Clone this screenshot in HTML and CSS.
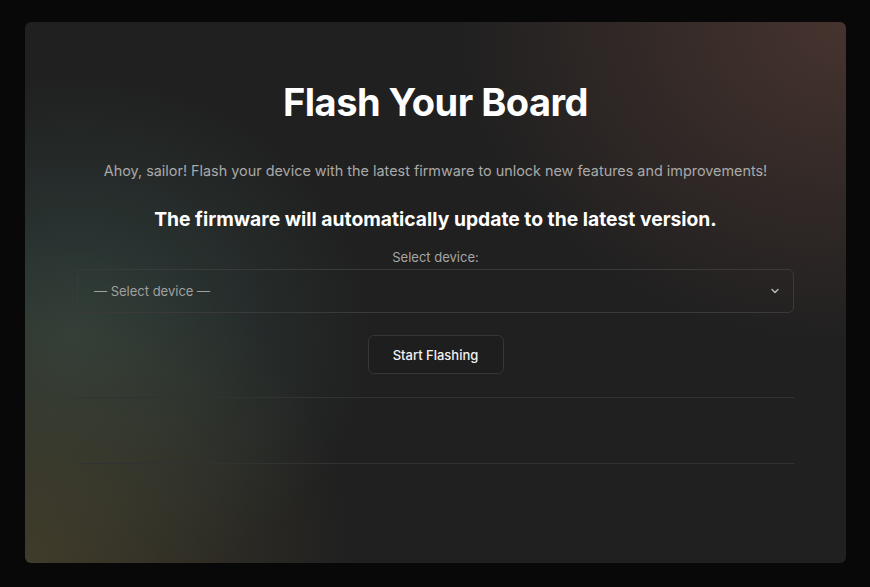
FILE: index.html
```html
<!DOCTYPE html>
<html>
<head>
    <title>Flash Your Board</title>
    <link rel="stylesheet" href="styles.css">
</head>
<body>
    <div class="card">
        <h1>Flash Your Board</h1>
        <p class="intro">Ahoy, sailor! Flash your device with the latest firmware to unlock new features and improvements!</p>
        <p class="notice">The firmware will automatically update to the latest version.</p>

        <div class="form-group">
            <label for="device">Select device:</label>
            <div class="select-wrap">
                <select id="device">
                    <option value="">— Select device —</option>
                </select>
                <svg class="chevron" width="10" height="10" viewBox="0 0 10 10">
                    <path d="M2 3.5 L5 6.5 L8 3.5" fill="none" stroke="#b5b5b5" stroke-width="1.5" stroke-linecap="round" stroke-linejoin="round"/>
                </svg>
            </div>
        </div>

        <button class="flash-btn">Start Flashing</button>

        <div class="log"></div>
    </div>
</body>
</html>
```

FILE: styles.css
```css
html, body {
    height: 100%;
}
body {
    margin: 0;
    background-color: #080808;
    font-family: Inter, "Noto Sans", sans-serif;
    color: #ffffff;
    display: flex;
    padding: 22px 24px 24px 25px;
    box-sizing: border-box;
}
.card {
    flex: 1;
    border-radius: 6px;
    padding: 57px 52px 0 52px;
    display: flex;
    flex-direction: column;
    align-items: center;
    background-color: #202020;
    background-image:
        radial-gradient(ellipse 48% 60% at 100% 0%, rgba(80, 56, 50, 0.8), rgba(80, 56, 50, 0) 100%),
        radial-gradient(ellipse 40% 60% at 0% 100%, rgba(72, 66, 44, 0.8), rgba(72, 66, 44, 0) 100%),
        radial-gradient(ellipse 36% 48% at 6% 58%, rgba(50, 70, 66, 0.8), rgba(50, 70, 66, 0) 100%);
}
h1 {
    margin: 0;
    font-size: 38px;
    line-height: 46px;
    font-weight: 700;
    letter-spacing: -0.5px;
}
.intro {
    margin: 34px 0 0 0;
    font-size: 14.4px;
    line-height: 24px;
    color: #a9a9a9;
}
.notice {
    margin: 22px 0 0 0;
    font-size: 19.3px;
    line-height: 28px;
    font-weight: 700;
}
.form-group {
    width: 100%;
    margin-top: 15px;
    display: flex;
    flex-direction: column;
    align-items: center;
}
label {
    font-size: 13px;
    line-height: 18px;
    color: #a6a6a6;
    margin-bottom: 3px;
}
.select-wrap {
    position: relative;
    width: 100%;
}
select {
    width: 100%;
    height: 44px;
    padding: 0 16px;
    border: 1px solid #3a3a3a;
    border-radius: 6px;
    background: transparent;
    color: #a0a0a0;
    font-family: Inter, "Noto Sans", sans-serif;
    font-size: 13px;
    appearance: none;
    -webkit-appearance: none;
    box-sizing: border-box;
}
.chevron {
    position: absolute;
    right: 14px;
    top: 17px;
}
.flash-btn {
    margin-top: 22px;
    width: 136px;
    height: 39px;
    border: 1px solid #363636;
    border-radius: 6px;
    background-color: #1e1e1e;
    color: #f2f2f2;
    font-family: Inter, "Noto Sans", sans-serif;
    font-size: 13px;
    font-weight: 500;
    cursor: pointer;
}
.log {
    width: 100%;
    height: 65px;
    margin-top: 23px;
    border-top: 1px solid #2f3331;
    border-bottom: 1px solid #2f3331;
}
```
